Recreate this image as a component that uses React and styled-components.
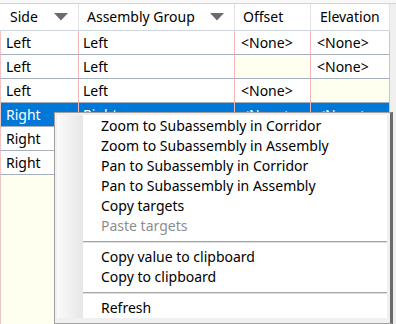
import React from 'react';
import styled, { createGlobalStyle } from 'styled-components';

const GlobalStyle = createGlobalStyle`
  html, body {
    margin: 0;
    padding: 0;
    background: #f0f0f0;
  }
  body {
    font-family: "Noto Sans", "Open Sans", sans-serif;
    font-size: 14px;
    color: #000;
  }
  * {
    box-sizing: border-box;
  }
`;

const Screen = styled.div`
  position: relative;
  width: 396px;
  height: 324px;
  overflow: hidden;
  background: #f0f0f0;
  display: flex;
  flex-direction: column;
`;

const TopStrip = styled.div`
  height: 4px;
  flex: none;
  background: #f7f7f7;
  border-bottom: 1px solid #d4d4d4;
`;

const Grid = styled.div`
  width: 390px;
  flex: 1;
  display: grid;
  grid-template-columns: 79px 156px 76px 79px;
  grid-template-rows: 27px repeat(6, 24px) 1fr;
  background: #fffff0;
`;

const HeaderCell = styled.div`
  display: flex;
  align-items: center;
  justify-content: space-between;
  padding: 0 ${({ $arrow }) => ($arrow ? '10px' : '4px')} 1px ${({ $indent }) => $indent}px;
  background: #fff;
  border-right: 1px solid #e3e3e3;
  border-bottom: 1px solid #cfd6e0;
  white-space: nowrap;
`;

const Cell = styled.div`
  display: flex;
  align-items: center;
  padding-left: ${({ $indent }) => $indent}px;
  background: ${({ $selected, $empty }) =>
    $selected ? '#0078d7' : $empty ? '#fffff0' : '#fff'};
  color: ${({ $selected }) => ($selected ? '#fff' : '#000')};
  border-right: 1px solid #f3b6b6;
  border-bottom: 1px solid #a4afbf;
  border-left: ${({ $first }) => ($first ? '1px solid #f3c4c4' : 'none')};
  white-space: nowrap;
  overflow: hidden;
`;

const Filler = styled.div`
  background: #fffff0;
  border-right: 1px solid #f3b6b6;
  border-left: ${({ $first }) => ($first ? '1px solid #f3c4c4' : 'none')};
`;

const SortArrow = () => (
  <svg width="14" height="8" viewBox="0 0 14 8">
    <path d="M0 0 H14 L7 7.5 Z" fill="#6b6b6b" />
  </svg>
);

const Menu = styled.div`
  position: absolute;
  left: 54px;
  top: 112px;
  width: 339px;
  background: #f0f0f0;
  border: 1px solid #a0a0a0;
  border-right: 3px solid #6b6b6b;
  padding: 2px 3px 5px 2px;
`;

const MenuList = styled.div`
  display: flex;
  flex-direction: column;
  padding: 1px 0 0;
  background: linear-gradient(90deg, #fbfbfb 0px, #e6e6e6 26px, #ffffff 26px);
`;

const MenuItem = styled.div`
  height: 20px;
  line-height: 20px;
  padding-left: 44px;
  color: ${({ $disabled }) => ($disabled ? '#8d8d8d' : '#000')};
  white-space: nowrap;
`;

const Separator = styled.div`
  height: 11px;
  margin-left: 26px;
  display: flex;
  flex-direction: column;
  justify-content: center;
  &::before {
    content: '';
    height: 1px;
    background: #a6a6a6;
  }
  &::after {
    content: '';
    height: 1px;
    background: #dedede;
  }
`;

const columns = [
  { title: 'Side', arrow: true, head: 10, data: 5 },
  { title: 'Assembly Group', arrow: true, head: 8, data: 4 },
  { title: 'Offset', arrow: false, head: 8, data: 6 },
  { title: 'Elevation', arrow: false, head: 9, data: 6 },
];

// rows below the selected one are covered by the menu past the first column
const rows = [
  ['Left', 'Left', '<None>', '<None>'],
  ['Left', 'Left', '', '<None>'],
  ['Left', 'Left', '<None>', ''],
  ['Right', 'Right', '<None>', '<None>'],
  ['Right', '', '', ''],
  ['Right', '', '', ''],
];

const menuItems = [
  { label: 'Zoom to Subassembly in Corridor' },
  { label: 'Zoom to Subassembly in Assembly' },
  { label: 'Pan to Subassembly in Corridor' },
  { label: 'Pan to Subassembly in Assembly' },
  { label: 'Copy targets' },
  { label: 'Paste targets', disabled: true },
  { separator: true },
  { label: 'Copy value to clipboard' },
  { label: 'Copy to clipboard' },
  { separator: true },
  { label: 'Refresh' },
];

export default function App() {
  return (
    <>
      <GlobalStyle />
      <Screen>
        <TopStrip />
        <Grid>
          {columns.map((col) => (
            <HeaderCell key={col.title} $indent={col.head} $arrow={col.arrow}>
              <span>{col.title}</span>
              {col.arrow && <SortArrow />}
            </HeaderCell>
          ))}
          {rows.map((row, r) =>
            row.map((value, c) => (
              <Cell
                key={`${r}-${c}`}
                $indent={columns[c].data}
                $first={c === 0}
                $selected={r === 3}
                $empty={value === '' && r < 3}
              >
                {value}
              </Cell>
            ))
          )}
          {columns.map((col, c) => (
            <Filler key={`f-${col.title}`} $first={c === 0} />
          ))}
        </Grid>
        <Menu>
          <MenuList>
            {menuItems.map((item, i) =>
              item.separator ? (
                <Separator key={i} />
              ) : (
                <MenuItem key={i} $disabled={item.disabled}>
                  {item.label}
                </MenuItem>
              )
            )}
          </MenuList>
        </Menu>
      </Screen>
    </>
  );
}
